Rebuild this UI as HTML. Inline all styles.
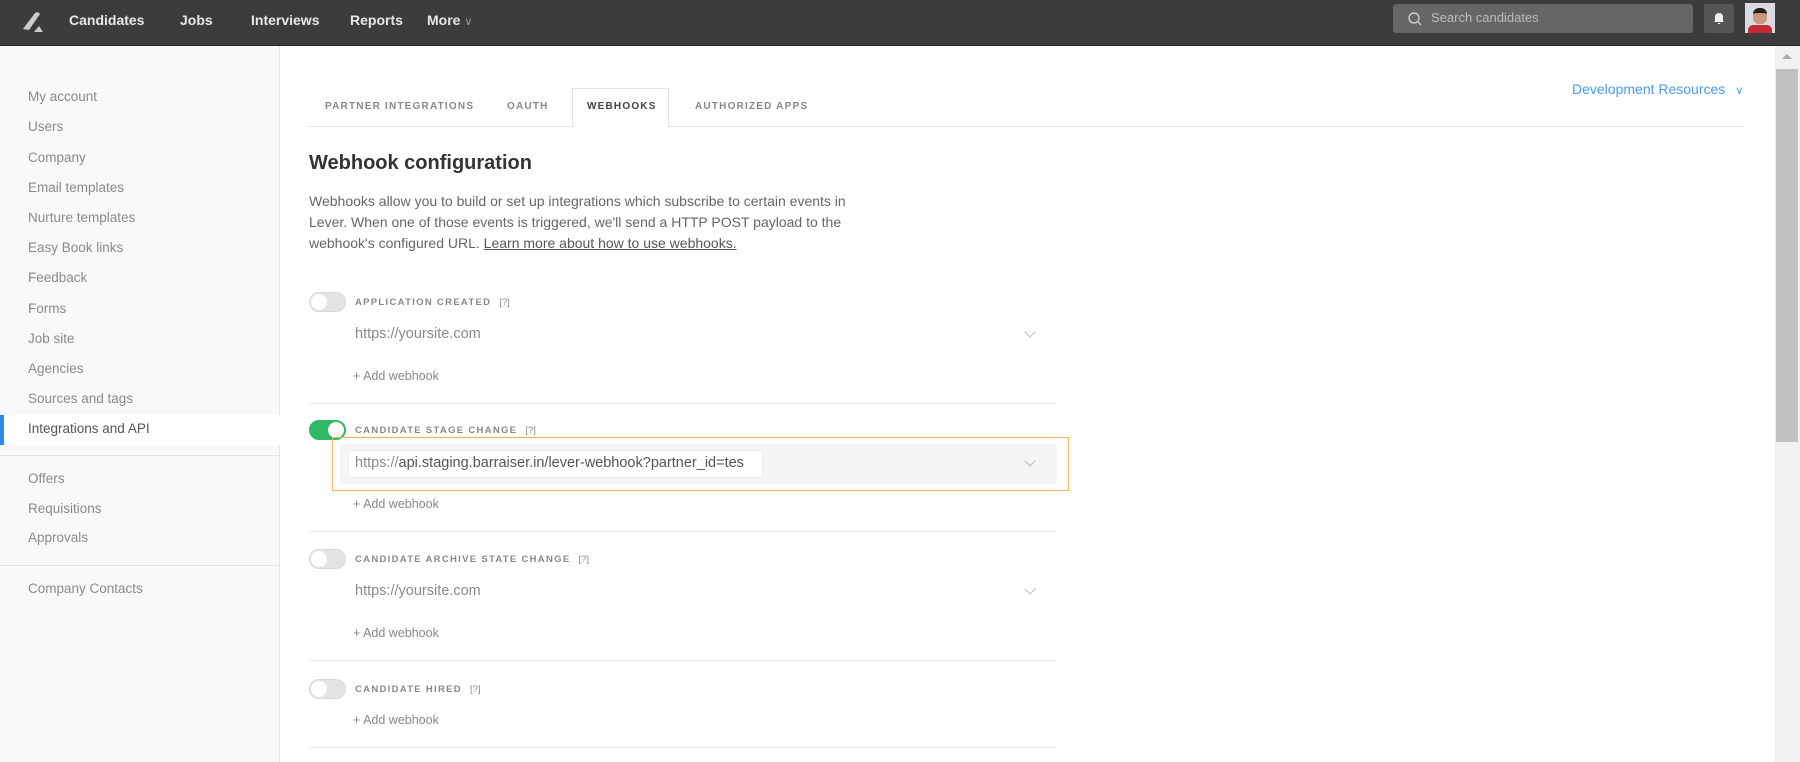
<!DOCTYPE html>
<html><head><meta charset="utf-8"><style>
*{box-sizing:border-box;margin:0;padding:0}
body{width:1800px;height:762px;overflow:hidden;background:#fff;font-family:"Liberation Sans",sans-serif;position:relative;color:#444}
.top{position:absolute;left:0;top:0;width:1800px;height:46px;background:#3c3c3e;border-bottom:1px solid #222}
.nav{position:absolute;top:12px;color:#e8e8e8;font-weight:bold;font-size:14px}
.side{position:absolute;left:0;top:46px;width:280px;height:716px;background:#f9f9f9;border-right:1px solid #e6e6e6}
.si{position:absolute;left:28px;font-size:13.5px;color:#8a8a8a}
.abs{position:absolute}
.tab{position:absolute;top:101px;font-size:10px;letter-spacing:1.2px;color:#888;font-weight:bold}
.tog{position:absolute;left:309px;width:37px;height:20px;border-radius:10px;background:#e4e4e4;border:1px solid #d8d8d8}
.tog::after{content:"";position:absolute;left:1px;top:1px;width:16px;height:16px;border-radius:50%;background:#fff}
.tog.on{background:#2fb866;border-color:#2fb866}
.tog.on::after{left:18px}
.lbl{position:absolute;left:355px;font-size:9.5px;letter-spacing:1.3px;color:#888;font-weight:bold}
.lbl span{font-weight:normal;letter-spacing:0;margin-left:8px}
.url{position:absolute;left:355px;font-size:14.5px;color:#8a8a8a}
.add{position:absolute;left:353px;font-size:12.5px;color:#888}
.chev{position:absolute;left:1026px;width:8px;height:8px;border-right:1px solid #bbb;border-bottom:1px solid #bbb;transform:rotate(45deg)}
.div{position:absolute;left:309px;width:748px;height:1px;background:#e8e8e8}
</style></head><body>
<div class="top">
<svg class="abs" style="left:20px;top:9px" width="26" height="26" viewBox="0 0 26 26"><path d="M3 20 L15 4 Q18 2 20 5 L9 21 Z" fill="#ccc"/><path d="M14 23 L19 17 L23 23Z" fill="#ccc"/></svg>
<div class="nav" style="left:69px">Candidates</div>
<div class="nav" style="left:180px">Jobs</div>
<div class="nav" style="left:251px">Interviews</div>
<div class="nav" style="left:350px">Reports</div>
<div class="nav" style="left:427px">More <span style="font-weight:normal;color:#999;font-size:11px">&#8744;</span></div>
<div class="abs" style="left:1393px;top:4px;width:300px;height:29px;background:#666;border-radius:3px"></div>
<svg class="abs" style="left:1407px;top:11px" width="16" height="16"><circle cx="7" cy="7" r="5" fill="none" stroke="#ccc" stroke-width="1.4"/><path d="M11 11 L14 14" stroke="#ccc" stroke-width="1.4"/></svg>
<div class="abs" style="left:1431px;top:10px;font-size:13px;color:#bdbdbd">Search candidates</div>
<div class="abs" style="left:1704px;top:4px;width:30px;height:29px;background:#555;border-radius:2px"></div>
<svg class="abs" style="left:1712px;top:11px" width="14" height="14"><path d="M3 10 L3 6 Q3 2 7 2 Q11 2 11 6 L11 10 L12 11 L2 11Z M6 12 h2 v1 h-2z" fill="#eee"/></svg>
<div class="abs" style="left:1745px;top:3px;width:30px;height:30px;background:#d9dbe0;overflow:hidden"><div class="abs" style="left:8px;top:5px;width:14px;height:16px;border-radius:6px;background:#c9987e;border-top:5px solid #222"></div><div class="abs" style="left:3px;top:22px;width:24px;height:10px;background:#c62b34;border-radius:5px 5px 0 0"></div></div>
</div>
<div class="side">
<div class="si" style="top:43px">My account</div>
<div class="si" style="top:73px">Users</div>
<div class="si" style="top:104px">Company</div>
<div class="si" style="top:134px">Email templates</div>
<div class="si" style="top:164px">Nurture templates</div>
<div class="si" style="top:194px">Easy Book links</div>
<div class="si" style="top:224px">Feedback</div>
<div class="si" style="top:255px">Forms</div>
<div class="si" style="top:285px">Job site</div>
<div class="si" style="top:315px">Agencies</div>
<div class="si" style="top:345px">Sources and tags</div>
<div class="abs" style="left:0;top:369px;width:280px;height:30px;background:#fff;border-left:4px solid #2c8ae8"></div>
<div class="si" style="top:375px;color:#555">Integrations and API</div>
<div class="abs" style="left:0;top:409px;width:280px;height:1px;background:#e3e3e3"></div>
<div class="si" style="top:425px">Offers</div>
<div class="si" style="top:455px">Requisitions</div>
<div class="si" style="top:484px">Approvals</div>
<div class="abs" style="left:0;top:519px;width:280px;height:1px;background:#e3e3e3"></div>
<div class="si" style="top:535px">Company Contacts</div>
</div>
<div class="abs" style="left:309px;top:126px;width:1436px;height:1px;background:#e3e3e3"></div>
<div class="abs" style="left:572px;top:88px;width:97px;height:39px;background:#fff;border:1px solid #e3e3e3;border-bottom:none"></div>
<div class="tab" style="left:325px">PARTNER INTEGRATIONS</div>
<div class="tab" style="left:507px">OAUTH</div>
<div class="tab" style="left:587px;color:#444">WEBHOOKS</div>
<div class="tab" style="left:695px">AUTHORIZED APPS</div>
<div class="abs" style="left:1572px;top:81px;font-size:14px;color:#4a9bea">Development Resources <span style="font-size:11px;margin-left:6px">&#8744;</span></div>
<div class="abs" style="left:309px;top:152px;font-size:20px;font-weight:bold;color:#333">Webhook configuration</div>
<div class="abs" style="left:309px;top:191px;width:560px;font-size:14px;line-height:21px;color:#666">Webhooks allow you to build or set up integrations which subscribe to certain events in Lever. When one of those events is triggered, we'll send a HTTP POST payload to the webhook's configured URL. <span style="text-decoration:underline;color:#555">Learn more about how to use webhooks.</span></div>

<div class="tog" style="top:292px"></div>
<div class="lbl" style="top:297px">APPLICATION CREATED<span>[?]</span></div>
<div class="url" style="top:326px">https://yoursite.com</div>
<div class="chev" style="top:328px"></div>
<div class="add" style="top:369px">+ Add webhook</div>
<div class="div" style="top:403px"></div>

<div class="tog on" style="top:420px"></div>
<div class="lbl" style="top:425px">CANDIDATE STAGE CHANGE<span>[?]</span></div>
<div class="abs" style="left:332px;top:437px;width:737px;height:54px;border:1.5px solid #f5b565"></div>
<div class="abs" style="left:340px;top:444px;width:717px;height:40px;background:#f5f5f5"></div>
<div class="abs" style="left:348px;top:450px;width:415px;height:28px;background:#fff;border:1px solid #eee"></div>
<div class="url" style="top:455px">https://<span style="color:#555">api.staging.barraiser.in/lever-webhook?partner_id=tes</span></div>
<div class="chev" style="top:457px"></div>
<div class="add" style="top:497px">+ Add webhook</div>
<div class="div" style="top:531px"></div>

<div class="tog" style="top:549px"></div>
<div class="lbl" style="top:554px">CANDIDATE ARCHIVE STATE CHANGE<span>[?]</span></div>
<div class="url" style="top:583px">https://yoursite.com</div>
<div class="chev" style="top:585px"></div>
<div class="add" style="top:626px">+ Add webhook</div>
<div class="div" style="top:660px"></div>

<div class="tog" style="top:679px"></div>
<div class="lbl" style="top:684px">CANDIDATE HIRED<span>[?]</span></div>
<div class="add" style="top:713px">+ Add webhook</div>
<div class="div" style="top:747px"></div>

<div class="abs" style="left:1775px;top:46px;width:25px;height:716px;background:#f1f1f1"></div>
<div class="abs" style="left:1782px;top:54px;width:0;height:0;border-left:5px solid transparent;border-right:5px solid transparent;border-bottom:5px solid #aaa"></div>
<div class="abs" style="left:1776px;top:69px;width:22px;height:373px;background:#c1c1c1"></div>
</body></html>
